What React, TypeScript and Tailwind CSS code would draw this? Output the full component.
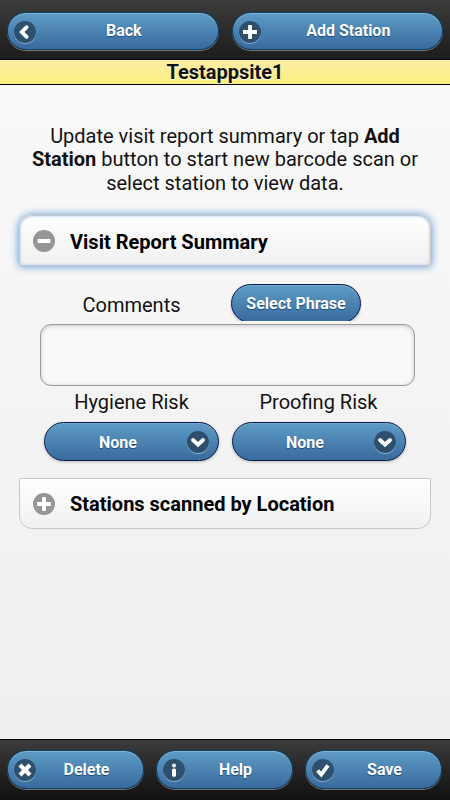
import type { ReactNode } from 'react';
import clsx from 'clsx';

type IconName = 'back' | 'plus' | 'minus' | 'down' | 'delete' | 'info' | 'check';

// All glyphs share an 18x18 grid.
const ICON_PATHS: Record<IconName, ReactNode> = {
  back: <path d="M10.6 4.2 5.8 9l4.8 4.8" strokeLinecap="round" />,
  plus: <path d="M9 2v14M2 9h14" />,
  minus: <path d="M2.6 9h12.8" strokeWidth="4" />,
  down: <path d="m4 7 5 4.7L14 7" strokeLinecap="round" />,
  delete: <path d="m4 4 10 10M14 4 4 14" strokeWidth="4.2" />,
  info: (
    <g fill="white" stroke="none">
      <circle cx="9" cy="4.6" r="2" />
      <rect x="7" y="7.4" width="4" height="8.4" rx="1.5" />
    </g>
  ),
  check: <path d="m3.6 9.6 3.6 4L14 4.3" />
};

function Icon({ name, dark = true }: { name: IconName; dark?: boolean }) {
  return (
    <span
      className={clsx(
        'flex h-[22px] w-[22px] shrink-0 items-center justify-center rounded-full',
        dark ? 'bg-[#2d506e] shadow-[0_1px_0_rgba(255,255,255,0.4)]' : 'bg-[#959595]'
      )}
    >
      <svg viewBox="0 0 18 18" className="h-[18px] w-[18px]" fill="none" stroke="white" strokeWidth="3.8">
        {ICON_PATHS[name]}
      </svg>
    </span>
  );
}

type ButtonProps = { label: string; icon?: IconName; iconRight?: boolean; inBar?: boolean; className?: string };

function Button({ label, icon, iconRight, inBar, className }: ButtonProps) {
  return (
    <button
      type="button"
      className={clsx(
        'relative flex items-center justify-center rounded-full border bg-linear-to-b from-[#5f9cc5] to-[#396b9e] text-base leading-5 font-bold whitespace-nowrap text-white [text-shadow:0_1px_1px_#194b7e]',
        inBar
          ? 'border-[#0b4267] shadow-[inset_0_1px_0_rgba(255,255,255,0.25),0_1px_0_rgba(255,255,255,0.4)]'
          : 'border-[#08194b] shadow-[inset_0_1px_0_rgba(255,255,255,0.15),0_1px_3px_rgba(0,0,0,0.25)]',
        className
      )}
    >
      {icon ? (
        <span className={clsx('absolute', inBar ? 'top-[7.5px]' : 'top-[8px]', iconRight ? 'right-[9px]' : 'left-[6px]')}>
          <Icon name={icon} />
        </span>
      ) : null}
      {label}
    </button>
  );
}

function CollapsibleHeading({ label, open }: { label: string; open?: boolean }) {
  return (
    <h3
      className={clsx(
        'flex h-[51px] items-center gap-[15px] border border-[#c5c8cc] bg-linear-to-b from-white to-[#f0f0f0] pt-px pl-[13px] text-[20px] font-bold text-black',
        open
          ? 'rounded-t-[13px] shadow-[inset_0_0_3px_#9bc4ee,0_0_8px_rgba(70,135,206,0.95)]'
          : 'rounded-b-[13px]'
      )}
    >
      <Icon name={open ? 'minus' : 'plus'} dark={false} />
      <span className={open ? 'pt-[2px]' : 'pt-px'}>{label}</span>
    </h3>
  );
}

export default function App() {
  return (
    <div className="flex h-[800px] w-[450px] flex-col bg-linear-to-b from-[#fafafa] to-[#eeeeee] font-['Roboto',sans-serif] text-[20px] leading-6 text-[#111] [text-shadow:0_1px_0_#fff]">
      <header className="shrink-0">
        <div className="flex h-[59px] gap-[13px] bg-linear-to-b from-[#3c3c3c] to-[#1c1c1c] px-[7px] pt-[12px]">
          <Button label="Back" icon="back" inBar className="h-[38px] w-[212px] pl-[22px]" />
          <Button label="Add Station" icon="plus" inBar className="h-[38px] w-[212px] pl-[22px]" />
        </div>
        <h1 className="h-[26px] border-y border-black bg-linear-to-b from-[#fceda7] to-[#fbef7e] text-center font-bold">
          Testappsite1
        </h1>
      </header>

      <main className="flex-1 px-[19px] pt-[39.5px]">
        <p className="text-center leading-[23.7px]">
          Update visit report summary or tap <b>Add</b>
          <br />
          <b>Station</b> button to start new barcode scan or
          <br />
          select station to view data.
        </p>

        <section className="mt-[19.4px]">
          <CollapsibleHeading label="Visit Report Summary" open />
          <div className="px-[21px] pt-[18px]">
            <div className="flex h-[40px] items-start">
              <label htmlFor="comments" className="w-[183px] pt-[9px] text-center">
                Comments
              </label>
              <div className="ml-[7px] h-[37px] w-[132px] overflow-hidden px-px">
                <Button label="Select Phrase" className="h-[39px] w-full pt-px" />
              </div>
            </div>
            <textarea
              id="comments"
              className="block h-[62px] w-[375px] resize-none rounded-[11px] border border-[#999] bg-[#f9f9f9] shadow-[inset_0_1px_4px_rgba(0,0,0,0.2)]"
            />
            <div className="flex pt-[4px] pl-[4px] text-center">
              <div className="w-[175px]">
                <div>Hygiene Risk</div>
                <Button label="None" icon="down" iconRight className="mt-[8px] h-[39px] w-full pt-[2px] pr-[27px]" />
              </div>
              <div className="ml-[12.5px] w-[174px]">
                <div>Proofing Risk</div>
                <Button label="None" icon="down" iconRight className="mt-[8px] h-[39px] w-full pt-[2px] pr-[27px]" />
              </div>
            </div>
          </div>
        </section>

        <section className="mt-[16.5px]">
          <CollapsibleHeading label="Stations scanned by Location" />
        </section>
      </main>

      <footer className="flex h-[61px] shrink-0 gap-[12px] border-t border-black bg-linear-to-b from-[#3c3c3c] to-[#111] px-[7px] pt-[10px]">
        <Button label="Delete" icon="delete" inBar className="h-[39px] w-[137px] pl-[22px]" />
        <Button label="Help" icon="info" inBar className="h-[39px] w-[137px] pl-[22px]" />
        <Button label="Save" icon="check" inBar className="h-[39px] w-[137px] pl-[22px]" />
      </footer>
    </div>
  );
}
